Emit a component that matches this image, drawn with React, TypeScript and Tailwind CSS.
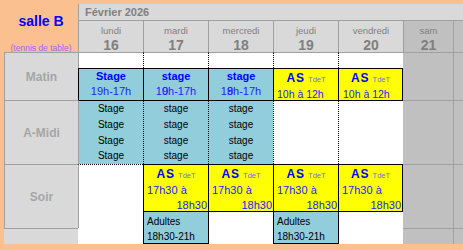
import type { ReactNode } from 'react';

const days = [
  { name: 'lundi', num: 16, col: 'col-start-3' },
  { name: 'mardi', num: 17, col: 'col-start-4' },
  { name: 'mercredi', num: 18, col: 'col-start-5' },
  { name: 'jeudi', num: 19, col: 'col-start-6' },
  { name: 'vendredi', num: 20, col: 'col-start-7' },
];

// two digits printed on top of each other, as in the sheet
const Over = ({ a, b }: { a: string; b: string }) => (
  <span className="relative inline-block">
    {a}
    <span className="absolute left-0 top-0">{b}</span>
  </span>
);

const StageAm = ({ title, time }: { title: string; time: ReactNode }) => (
  <div className="flex flex-col items-center leading-[15px]">
    <span className="text-[11px] font-bold text-[#0000ff]">{title}</span>
    <span className="text-[11px] text-[#2424ff]">{time}</span>
  </div>
);

const AsTitle = () => (
  <div className="text-center leading-[15px]">
    <span className="text-[12px] font-bold tracking-[1px] text-[#0000ff]">AS</span>
    <span className="ml-[3px] text-[7.5px] text-[#6b6bff]">TdeT</span>
  </div>
);

const StageList = ({ word }: { word: string }) => (
  <div className="flex flex-col items-center overflow-hidden text-[10px] leading-[15.75px] text-black">
    <span>{word}</span>
    <span>{word}</span>
    <span>{word}</span>
    <span>{word}</span>
  </div>
);

const AsEvening = ({ extra }: { extra: string }) => (
  <div className={`row-start-7 flex flex-col border-y border-l border-black bg-[#ffff00] leading-[15.33px] ${extra}`}>
    <AsTitle />
    <span className="pl-[3px] text-[11px] text-[#1a1aff]">17h30 à</span>
    <span className="pr-[1px] text-right text-[11px] text-[#1a1aff]">18h30</span>
  </div>
);

const Adultes = ({ col }: { col: string }) => (
  <div className={`${col} row-span-2 row-start-8 flex flex-col border-b border-l border-black bg-[#92cddc] pl-[3px] pt-[2px] text-[10px] leading-[15px] text-black`}>
    <span>Adultes</span>
    <span>18h30-21h</span>
  </div>
);

export default function App() {
  return (
    <div className="grid h-[250px] w-[463px] grid-cols-[4px_74px_65px_65px_65px_65px_65px_50px_10px] grid-rows-[4px_17px_31px_16px_32px_64px_48px_16px_16px_6px] overflow-hidden bg-[#fac090] font-['Liberation_Sans',Arial,sans-serif]">
      {/* title */}
      <div className="col-start-2 row-span-3 row-start-1 flex flex-col items-center pt-[13px]">
        <span className="text-[14px] font-bold leading-[16px] text-[#0000ff]">salle B</span>
        <span className="mt-[14px] text-[8.5px] leading-[10px] text-[#9966ff]">(tennis de table)</span>
      </div>

      {/* month */}
      <div className="col-span-7 col-start-3 row-start-2 flex items-center border-b border-l border-[#a0a0a0] bg-[#d9d9d9] pl-[6px] text-[11px] font-bold text-[#808080]">
        Février 2026
      </div>

      {/* day headers */}
      {days.map((d) => (
        <div
          key={d.name}
          className={`${d.col} row-start-3 flex flex-col items-center border-l border-[#a0a0a0] bg-[#d9d9d9] pt-[4px] text-[#808080]`}
        >
          <span className="text-[9.5px] leading-[12px]">{d.name}</span>
          <span className="text-[14px] font-bold leading-[16px]">{d.num}</span>
        </div>
      ))}
      <div className="col-start-8 row-start-3 flex flex-col items-center border-l border-[#a0a0a0] bg-[#c0c0c0] pt-[4px] text-[#808080]">
        <span className="text-[9.5px] leading-[12px]">sam</span>
        <span className="text-[14px] font-bold leading-[16px]">21</span>
      </div>
      <div className="col-start-9 row-start-3 border-l border-[#a0a0a0] bg-[#c0c0c0]" />

      {/* period labels */}
      <div className="col-start-2 row-span-2 row-start-4 flex items-center justify-center border-l border-t border-[#a0a0a0] bg-[#d9d9d9] text-[12px] font-bold text-[#a6a6a6]">
        Matin
      </div>
      <div className="col-start-2 row-start-6 flex items-center justify-center border-l border-t border-[#a0a0a0] bg-[#d9d9d9] text-[12px] font-bold text-[#a6a6a6]">
        A-Midi
      </div>
      <div className="col-start-2 row-span-2 row-start-7 flex items-center justify-center border-l border-t border-[#a0a0a0] bg-[#d9d9d9] text-[12px] font-bold text-[#a6a6a6]">
        Soir
      </div>
      <div className="col-start-2 row-start-9 border-t border-[#a0a0a0] bg-[#d9d9d9]" />

      {/* empty row */}
      <div className="col-start-3 row-start-4 border-l border-t border-[#a0a0a0] bg-white" />
      <div className="col-start-4 row-start-4 border-l border-t border-l-black border-t-[#a0a0a0] bg-white [border-left-style:dotted]" />
      <div className="col-start-5 row-start-4 border-l border-t border-l-black border-t-[#a0a0a0] bg-white [border-left-style:dotted]" />
      <div className="col-start-6 row-start-4 border-l border-t border-l-black border-t-[#a0a0a0] bg-white [border-left-style:dotted]" />
      <div className="col-start-7 row-start-4 border-l border-t border-l-black border-t-[#a0a0a0] bg-white [border-left-style:dotted]" />

      {/* matin */}
      <div className="col-start-3 row-start-5 border-l border-t border-black bg-[#92cddc]">
        <StageAm title="Stage" time="19h-17h" />
      </div>
      <div className="col-start-4 row-start-5 border-l border-t border-black bg-[#92cddc]">
        <StageAm title="stage" time={<>1<Over a="0" b="9" />h-17h</>} />
      </div>
      <div className="col-start-5 row-start-5 border-l border-t border-black bg-[#92cddc]">
        <StageAm title="stage" time={<>1<Over a="8" b="9" />h-17h</>} />
      </div>
      <div className="col-start-6 row-start-5 flex flex-col border-l border-t border-black bg-[#ffff00] leading-[15px]">
        <AsTitle />
        <span className="pl-[3px] text-[10.5px] text-[#1a1aff]">10h à 12h</span>
      </div>
      <div className="col-start-7 row-start-5 flex flex-col border-l border-r border-t border-black bg-[#ffff00] leading-[15px]">
        <AsTitle />
        <span className="pl-[4px] text-[10.5px] text-[#1a1aff]">10h à 12h</span>
      </div>

      {/* après-midi */}
      <div className="col-start-3 row-start-6 border-l border-t border-l-[#a0a0a0] border-t-black bg-[#92cddc]">
        <StageList word="Stage" />
      </div>
      <div className="col-start-4 row-start-6 border-l border-t border-black bg-[#92cddc] [border-left-style:dotted]">
        <StageList word="stage" />
      </div>
      <div className="col-start-5 row-start-6 border-l border-t border-black bg-[#92cddc] [border-left-style:dotted]">
        <StageList word="stage" />
      </div>
      <div className="col-start-6 row-start-6 border-l border-t border-black bg-white [border-left-style:dotted]" />
      <div className="col-start-7 row-start-6 border-l border-t border-black bg-white [border-left-style:dotted]" />

      {/* soir */}
      <div className="col-start-3 row-start-7 border-l border-t border-l-[#a0a0a0] border-t-black bg-white [border-top-style:dotted]" />
      <AsEvening extra="col-start-4" />
      <AsEvening extra="col-start-5" />
      <AsEvening extra="col-start-6" />
      <AsEvening extra="col-start-7 border-r" />

      <div className="col-start-3 row-start-8 border-l border-[#a0a0a0] bg-white" />
      <div className="col-start-3 row-start-9 bg-white" />
      <Adultes col="col-start-4" />
      <div className="col-start-5 row-span-2 row-start-8 border-l border-black bg-white" />
      <Adultes col="col-start-6" />
      <div className="col-start-7 row-span-2 row-start-8 border-l border-black bg-white" />

      {/* samedi + next */}
      <div className="col-start-8 row-span-2 row-start-4 border-t border-[#a0a0a0] bg-[#c0c0c0]" />
      <div className="col-start-8 row-start-6 border-t border-[#a0a0a0] bg-[#c0c0c0]" />
      <div className="col-start-8 row-span-2 row-start-7 border-t border-[#a0a0a0] bg-[#c0c0c0]" />
      <div className="col-start-8 row-start-9 border-t border-[#a0a0a0] bg-[#c0c0c0]" />
      <div className="col-start-9 row-span-2 row-start-4 border-l border-t border-[#a0a0a0] bg-[#c0c0c0]" />
      <div className="col-start-9 row-start-6 border-l border-t border-[#a0a0a0] bg-[#c0c0c0]" />
      <div className="col-start-9 row-span-2 row-start-7 border-l border-t border-[#a0a0a0] bg-[#c0c0c0]" />
      <div className="col-start-9 row-start-9 border-l border-t border-[#a0a0a0] bg-[#c0c0c0]" />
    </div>
  );
}
